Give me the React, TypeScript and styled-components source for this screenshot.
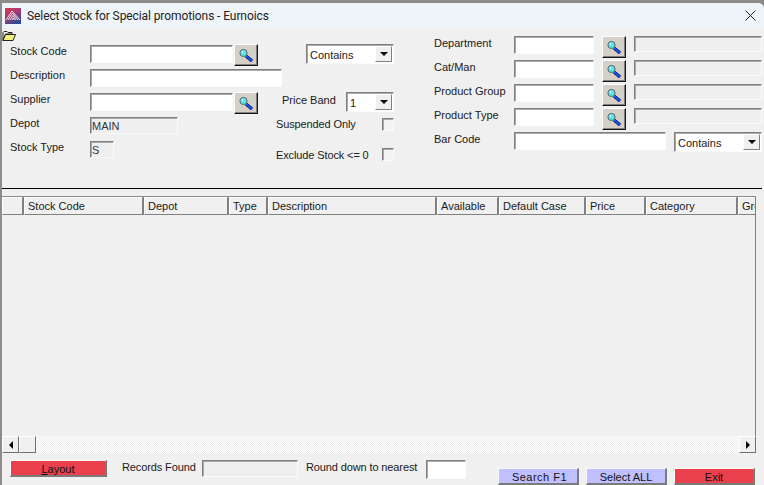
import styled, { createGlobalStyle } from "styled-components"

const GlobalStyle = createGlobalStyle`
  html, body {
    margin: 0;
    padding: 0;
    background: #8c8c8c;
    overflow: hidden;
  }
  * {
    box-sizing: border-box;
  }
`

const Page = styled.div`
  width: 764px;
  height: 485px;
  padding: 3px 0 0 2px;
  overflow: hidden;
`

const Window = styled.div`
  height: 482px;
  background: #f0f0f0;
  border-radius: 0 6px 0 0;
  display: flex;
  flex-direction: column;
  font-family: "Liberation Sans", Arial, sans-serif;
  font-size: 11px;
  color: #1a1a1a;
  overflow: hidden;
`

const TitleBar = styled.div`
  height: 25px;
  flex: none;
  background: #eff4f9;
  display: flex;
  align-items: center;
  padding: 0 8px 0 3px;
  gap: 6px;
`

const Title = styled.div`
  flex: 1;
  font-family: Roboto, sans-serif;
  font-size: 12px;
  letter-spacing: -0.09px;
  color: #222;
  white-space: nowrap;
`

const FormPanel = styled.div`
  height: 160px;
  flex: none;
  display: flex;
`

const FolderSlot = styled.div`
  width: 14px;
  margin-right: -6px;
  padding-top: 2px;
  flex: none;
`

const LeftColumn = styled.div`
  width: 266px;
  padding-top: 16px;
  flex: none;
`

const MiddleColumn = styled.div`
  width: 158px;
  padding-top: 16px;
  flex: none;
`

const RightColumn = styled.div`
  flex: 1;
  padding-top: 8px;
`

const Row = styled.div<{ $h?: number }>`
  height: ${(p) => p.$h ?? 24}px;
  display: flex;
  align-items: flex-start;
`

const Label = styled.span<{ $w?: number; $top?: number; $ml?: number; $tight?: boolean }>`
  width: ${(p) => (p.$w ? `${p.$w}px` : "auto")};
  margin-top: ${(p) => p.$top ?? 1}px;
  margin-left: ${(p) => p.$ml ?? 0}px;
  flex: none;
  line-height: 13px;
  white-space: nowrap;
  letter-spacing: ${(p) => (p.$tight ? "-0.12px" : "normal")};
`

const Input = styled.div<{ $w: number; $h?: number; $top?: number; $ml?: number; $off?: boolean }>`
  width: ${(p) => p.$w}px;
  height: ${(p) => p.$h ?? 18}px;
  margin-top: ${(p) => p.$top ?? 1}px;
  margin-left: ${(p) => p.$ml ?? 0}px;
  flex: none;
  background: ${(p) => (p.$off ? "#efefef" : "#fff")};
  border-style: solid;
  border-width: 1px;
  border-color: #7f7f7f #fbfbfb #fbfbfb #7f7f7f;
  box-shadow: inset 1px 1px 0 #a9a9a9;
  padding: 2px 0 0 1px;
  line-height: 13px;
  color: #333;
`

const LookupButton = styled.div<{ $ml?: number }>`
  width: 24px;
  height: 22px;
  margin-left: ${(p) => p.$ml ?? 1}px;
  flex: none;
  background: #d4d0c8;
  border-style: solid;
  border-width: 1px;
  border-color: #fff #161616 #161616 #fff;
  box-shadow: inset -1px -1px 0 #808080;
  display: flex;
  align-items: center;
  justify-content: center;
`

const Select = styled.div<{ $w: number; $ml?: number }>`
  width: ${(p) => p.$w}px;
  height: 20px;
  margin-left: ${(p) => p.$ml ?? 0}px;
  flex: none;
  background: #fff;
  border-style: solid;
  border-width: 1px;
  border-color: #7f7f7f #fbfbfb #fbfbfb #7f7f7f;
  box-shadow: inset 1px 1px 0 #a9a9a9;
  display: flex;
  align-items: center;
  justify-content: space-between;
  padding: 1px 1px 1px 3px;
`

const SelectText = styled.span`
  padding-top: 1px;
`

const SelectArrow = styled.div`
  width: 17px;
  height: 16px;
  background: #f0f0f0;
  border-style: solid;
  border-width: 1px;
  border-color: #fff #7f7f7f #7f7f7f #fff;
  display: flex;
  align-items: center;
  justify-content: center;
  &::after {
    content: "";
    border-style: solid;
    border-width: 4px 4px 0;
    border-color: #000 transparent transparent;
  }
`

const Check = styled.div<{ $top: number }>`
  width: 12px;
  height: 13px;
  margin-top: ${(p) => p.$top}px;
  flex: none;
  background: #f4f4f4;
  border-style: solid;
  border-width: 1px;
  border-color: #7f7f7f #fbfbfb #fbfbfb #7f7f7f;
  box-shadow: inset 1px 1px 0 #a9a9a9;
`

const Divider = styled.div`
  height: 1px;
  flex: none;
  margin-right: 2px;
  background: #000;
`

const DataGrid = styled.div`
  height: 240px;
  flex: none;
  margin: 7px 8px 0 0;
  border-top: 1px solid #8a8a8a;
  border-right: 1px solid #808080;
  display: flex;
  flex-direction: column;
`

const GridHead = styled.div`
  height: 18px;
  flex: none;
  display: flex;
  overflow: hidden;
`

const HeadCell = styled.div<{ $w: number }>`
  width: ${(p) => p.$w}px;
  flex: none;
  border-style: solid;
  border-width: 1px;
  border-color: #fff #808080 #808080 #fff;
  box-shadow: 1px 0 0 #808080;
  margin-right: 1px;
  padding: 1px 0 0 3px;
  line-height: 14px;
  white-space: nowrap;
  overflow: hidden;
`

const GridBody = styled.div`
  flex: 1;
`

const ScrollBar = styled.div`
  height: 17px;
  flex: none;
  margin-right: 8px;
  display: flex;
  background: repeating-conic-gradient(#fff 0 25%, #ececec 0 50%) 0 0 / 2px 2px;
`

const ScrollPart = styled.div<{ $w: number }>`
  width: ${(p) => p.$w}px;
  flex: none;
  background: #f0f0f0;
  border-style: solid;
  border-width: 1px;
  border-color: #fff #707070 #707070 #fff;
  display: flex;
  align-items: center;
  justify-content: center;
`

const ScrollSpace = styled.div`
  flex: 1;
`

const ArrowLeft = styled.div`
  border-style: solid;
  border-width: 4px 4px 4px 0;
  border-color: transparent #000 transparent transparent;
`

const ArrowRight = styled.div`
  border-style: solid;
  border-width: 4px 0 4px 4px;
  border-color: transparent transparent transparent #000;
`

const Footer = styled.div`
  flex: 1;
  display: flex;
  align-items: flex-start;
  padding: 7px 0 0 8px;
`

const ActionButton = styled.div<{ $w: number; $bg: string; $ml?: number; $mt?: number; $wide?: boolean }>`
  width: ${(p) => p.$w}px;
  height: 17px;
  margin-left: ${(p) => p.$ml ?? 0}px;
  margin-top: ${(p) => p.$mt ?? 0}px;
  flex: none;
  background: ${(p) => p.$bg};
  border-style: solid;
  border-width: 1px 2px 2px 1px;
  border-color: #f8f8f8 #7a7a7a #7a7a7a #f8f8f8;
  text-align: center;
  line-height: 16px;
  letter-spacing: ${(p) => (p.$wide ? "0.5px" : "normal")};
  padding-left: ${(p) => (p.$wide ? "3px" : "0")};
  color: #111;
`

const Mnemonic = styled.span`
  text-decoration: underline;
`

const FolderIcon = () => (
  <svg width="14" height="12" viewBox="0 0 14 12" style={{ display: "block" }}>
    <path d="M1 2.5 L2 1.5 H5 L6 2.5 H10 V4 H3.5 L1 10.5 Z" fill="#f0f0f0" stroke="#222" strokeWidth="1" />
    <path d="M3.5 4.5 H13.5 L11 10.5 H1 Z" fill="#f4f080" stroke="#222" strokeWidth="1" />
  </svg>
)

const LogoIcon = () => (
  <svg width="16" height="16" viewBox="0 0 16 16" style={{ display: "block", flex: "none" }}>
    <defs>
      <linearGradient id="logoFill" x1="0" y1="0" x2="0.6" y2="1">
        <stop offset="0" stopColor="#e0384c" />
        <stop offset="0.55" stopColor="#a03a78" />
        <stop offset="1" stopColor="#2a4a96" />
      </linearGradient>
    </defs>
    <rect width="16" height="16" fill="url(#logoFill)" />
    <path d="M1 12 L7 3 L15 12" fill="none" stroke="#f2dde4" strokeWidth="1" />
    <path d="M3 12 L7.5 5 L13 12" fill="none" stroke="#f2dde4" strokeWidth="1" />
    <path d="M5 12 L8 7.5 L11 12" fill="none" stroke="#f2dde4" strokeWidth="1" />
    <path d="M7 12 L8.2 10 L9.4 12" fill="none" stroke="#f2dde4" strokeWidth="1" />
  </svg>
)

const CloseIcon = () => (
  <svg width="11" height="11" viewBox="0 0 11 11" style={{ display: "block", flex: "none" }}>
    <path d="M0.5 0.5 L10.5 10.5 M10.5 0.5 L0.5 10.5" stroke="#222" strokeWidth="1" />
  </svg>
)

const LensIcon = () => (
  <svg width="16" height="15" viewBox="0 0 16 15" style={{ display: "block" }}>
    <path d="M8 8 L14 13" stroke="#101050" strokeWidth="3.4" />
    <path d="M8 8 L14 13" stroke="#1060f0" strokeWidth="1.8" />
    <circle cx="5.5" cy="5" r="3.6" fill="#5fe0e6" stroke="#4f6a70" strokeWidth="1" />
    <circle cx="4.5" cy="4" r="1" fill="#d8fbfb" />
  </svg>
)

const Lookup = ({ ml }: { ml?: number }) => (
  <LookupButton $ml={ml}>
    <LensIcon />
  </LookupButton>
)

const Dropdown = ({ w, ml, value }: { w: number; ml?: number; value: string }) => (
  <Select $w={w} $ml={ml}>
    <SelectText>{value}</SelectText>
    <SelectArrow />
  </Select>
)

const rightRows = ["Department", "Cat/Man", "Product Group", "Product Type"]

const columns = [
  { name: "", w: 21 },
  { name: "Stock Code", w: 119 },
  { name: "Depot", w: 84 },
  { name: "Type", w: 38 },
  { name: "Description", w: 168 },
  { name: "Available", w: 61 },
  { name: "Default Case", w: 86 },
  { name: "Price", w: 59 },
  { name: "Category", w: 91 },
  { name: "Group", w: 30 },
]

export default function App() {
  return (
    <Page>
      <GlobalStyle />
      <Window>
        <TitleBar>
          <LogoIcon />
          <Title>Select Stock for Special promotions - Eurnoics</Title>
          <CloseIcon />
        </TitleBar>

        <FormPanel>
          <FolderSlot>
            <FolderIcon />
          </FolderSlot>

          <LeftColumn>
            <Row>
              <Label $w={80}>Stock Code</Label>
              <Input $w={143} />
              <Lookup />
            </Row>
            <Row>
              <Label $w={80}>Description</Label>
              <Input $w={192} />
            </Row>
            <Row>
              <Label $w={80}>Supplier</Label>
              <Input $w={143} />
              <Lookup />
            </Row>
            <Row>
              <Label $w={80}>Depot</Label>
              <Input $w={88} $h={17} $off>MAIN</Input>
            </Row>
            <Row>
              <Label $w={80}>Stock Type</Label>
              <Input $w={24} $h={17} $off>S</Input>
            </Row>
          </LeftColumn>

          <MiddleColumn>
            <Row $h={48}>
              <Dropdown w={88} ml={30} value="Contains" />
            </Row>
            <Row $h={24}>
              <Label $w={64} $top={2} $ml={6}>Price Band</Label>
              <Dropdown w={48} value="1" />
            </Row>
            <Row $h={32}>
              <Label $w={106} $top={2} $tight>Suspended Only</Label>
              <Check $top={2} />
            </Row>
            <Row $h={24}>
              <Label $w={106} $tight>Exclude Stock &lt;= 0</Label>
              <Check $top={0} />
            </Row>
          </MiddleColumn>

          <RightColumn>
            {rightRows.map((name) => (
              <Row key={name}>
                <Label $w={80}>{name}</Label>
                <Input $w={80} $top={0} />
                <Lookup ml={8} />
                <Input $w={128} $h={16} $top={0} $ml={8} $off />
              </Row>
            ))}
            <Row>
              <Label $w={80}>Bar Code</Label>
              <Input $w={152} $top={0} />
              <Dropdown w={88} ml={8} value="Contains" />
            </Row>
          </RightColumn>
        </FormPanel>

        <Divider />

        <DataGrid>
          <GridHead>
            {columns.map((col) => (
              <HeadCell key={col.name} $w={col.w}>{col.name}</HeadCell>
            ))}
          </GridHead>
          <GridBody />
        </DataGrid>

        <ScrollBar>
          <ScrollPart $w={17}>
            <ArrowLeft />
          </ScrollPart>
          <ScrollPart $w={17} />
          <ScrollSpace />
          <ScrollPart $w={17}>
            <ArrowRight />
          </ScrollPart>
        </ScrollBar>

        <Footer>
          <ActionButton $w={97} $bg="#ea404e">
            <Mnemonic>L</Mnemonic>ayout
          </ActionButton>
          <Label $w={80} $ml={15} $tight>Records Found</Label>
          <Input $w={96} $h={17} $top={0} $off />
          <Label $w={120} $ml={8} $tight>Round down to nearest</Label>
          <Input $w={40} $h={19} $top={0} />
          <ActionButton $w={81} $bg="#c0c0ff" $ml={32} $mt={8} $wide>Search F1</ActionButton>
          <ActionButton $w={81} $bg="#c0c0ff" $ml={7} $mt={8}>Select ALL</ActionButton>
          <ActionButton $w={81} $bg="#ea404e" $ml={7} $mt={8}>Exit</ActionButton>
        </Footer>
      </Window>
    </Page>
  )
}
